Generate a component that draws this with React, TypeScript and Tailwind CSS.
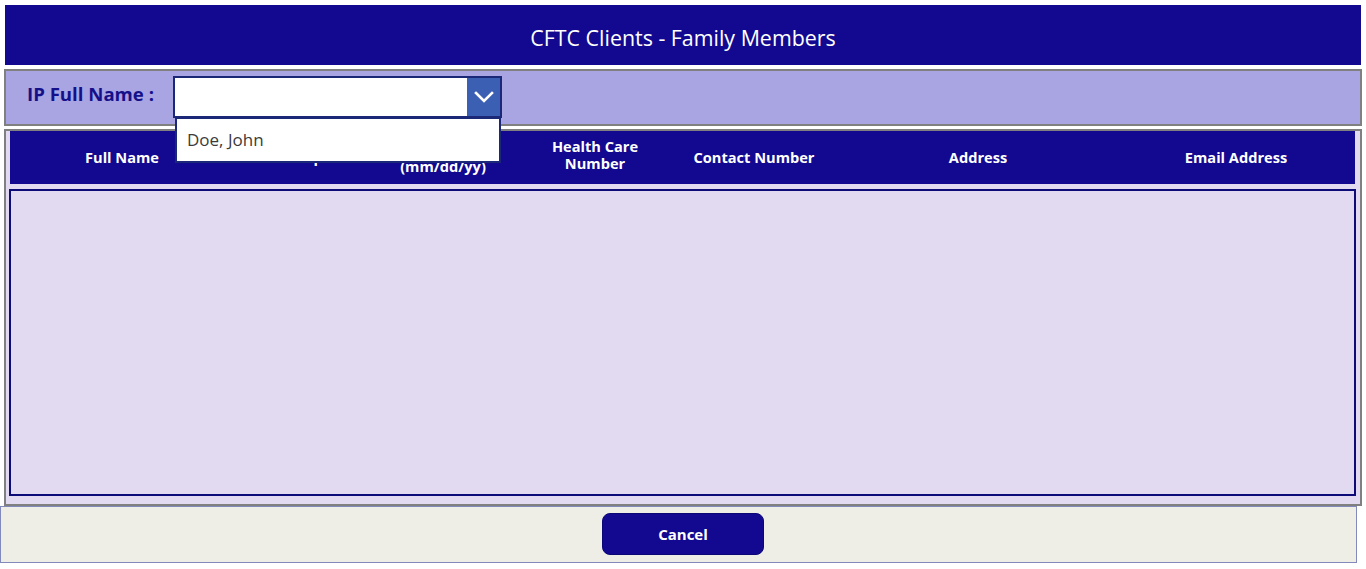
import React from "react";

const cols: { w: string; lines: string[]; up?: boolean }[] = [
  { w: "w-[224px]", lines: ["Full Name"] },
  { w: "w-[86px]", lines: ["Relationship"] },
  { w: "w-[66px]", lines: [] },
  { w: "w-[114px]", lines: ["Date of Birth", "(mm/dd/yy)"] },
  { w: "w-[190px]", lines: ["Health Care", "Number"], up: true },
  { w: "w-[128px]", lines: ["Contact Number"] },
  { w: "w-[320px]", lines: ["Address"] },
  { w: "w-[196px]", lines: ["Email Address"] },
];

export default function App() {
  return (
    <div
      className="w-[1366px] h-[569px] bg-white overflow-hidden relative"
      style={{ fontFamily: '"Open Sans", "Noto Sans", sans-serif' }}
    >
      {/* Title bar */}
      <div className="mx-[5px] mt-[5px] h-[60px] bg-[#120990] flex items-center justify-center pt-[6px]">
        <span className="text-white text-[21.4px] leading-none">CFTC Clients - Family Members</span>
      </div>

      {/* Filter bar */}
      <div className="mx-[4px] mt-[4px] h-[57px] border-2 border-[#808080] bg-[#a9a4e2] flex items-center relative z-10">
        <span className="ml-[21px] mb-[7px] text-[18.6px] font-bold text-[#15108a] w-[146px] whitespace-nowrap">IP Full Name :</span>
        <div className="relative mt-[-2px]">
          <div className="w-[329px] h-[42px] border-2 border-[#1b2878] bg-white flex justify-end">
            <div className="w-[33px] h-full bg-[#3a5fb3] flex items-center justify-center">
              <svg width="20" height="12" viewBox="0 0 20 12" fill="none">
                <path d="M2 2 L10 10 L18 2" stroke="white" strokeWidth="2.6" strokeLinecap="square" />
              </svg>
            </div>
          </div>
          <div className="absolute left-[2px] top-[41px] w-[326px] h-[46px] bg-white border-2 border-[#1b2878] flex items-center">
            <span className="ml-[10px] text-[17px] text-[#3b3b3b]">Doe, John</span>
          </div>
        </div>
      </div>

      {/* Table panel */}
      <div className="mx-[4px] mt-[3px] h-[377px] border-2 border-[#808080] bg-[#e1daf0] flex flex-col">
        <div className="ml-[4px] mr-[5px] h-[53px] bg-[#120990] flex overflow-hidden">
          {cols.map((c, i) => (
            <div
              key={i}
              className={`${c.w} shrink-0 flex flex-col items-center justify-center text-white text-[14.6px] font-bold leading-[17px] whitespace-nowrap ${c.up ? "pb-[6px]" : ""}`}
            >
              {c.lines.map((l, j) => (
                <span key={j}>{l}</span>
              ))}
            </div>
          ))}
        </div>
        <div className="ml-[3px] mr-[4px] mt-[5px] h-[307px] border-2 border-[#0d0b78] bg-[#e1daf0]" />
      </div>

      {/* Footer */}
      <div className="w-[1357px] h-[57px] border-[1.5px] border-[#8289bb] bg-[#eeede6] flex justify-center">
        <button className="mt-[6px] ml-[9px] w-[162px] h-[42px] rounded-[8px] bg-[#120990] border border-[#0c0777] text-white text-[15px] font-bold">
          Cancel
        </button>
      </div>
    </div>
  );
}
